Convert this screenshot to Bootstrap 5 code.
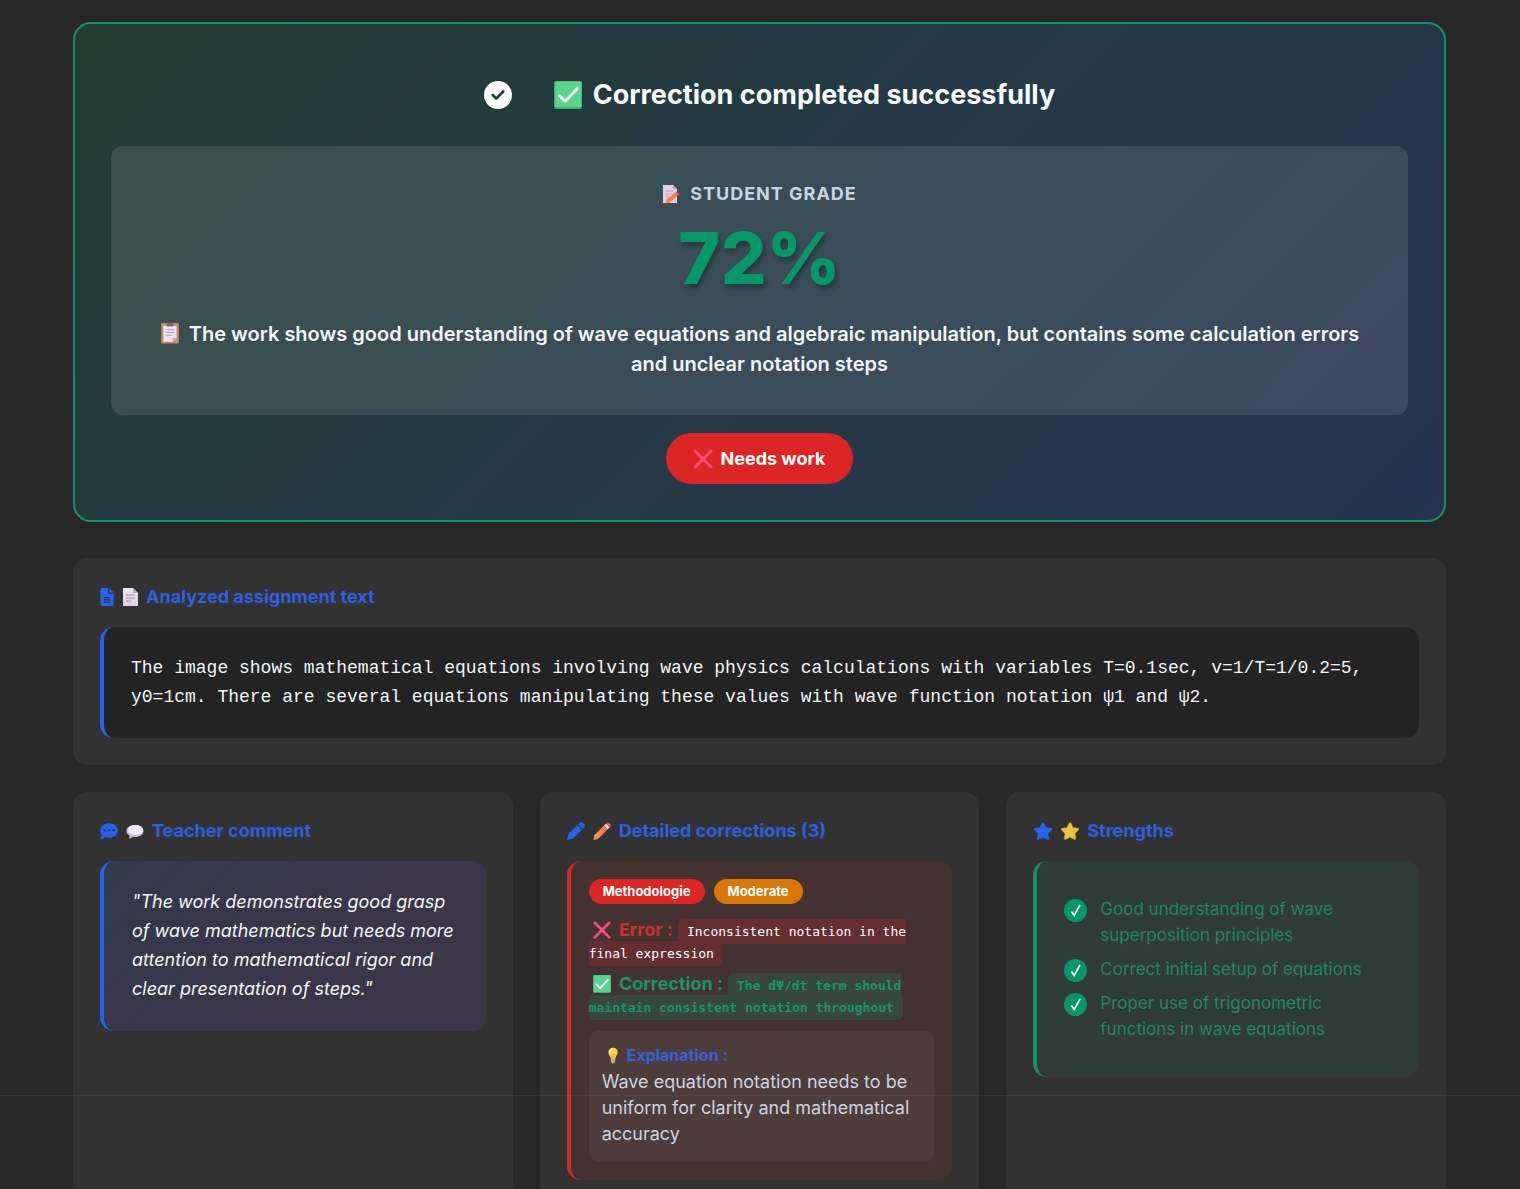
<!DOCTYPE html>
<html lang="en" data-bs-theme="dark">
<head>
<meta charset="utf-8">
<meta name="viewport" content="width=device-width, initial-scale=1">
<title>Correction result</title>
<link href="https://cdn.jsdelivr.net/npm/bootstrap@5.3.0/dist/css/bootstrap.min.css" rel="stylesheet">
<style>
  body { background: #272727; color: #f1f5f9; font-family: Inter, sans-serif; font-size: 18px; }
  .page { padding: 22px 74px 0 73px; scrollbar-width: none; }
  .page::-webkit-scrollbar { display: none; }
  .stack { gap: 27px; }
  .trio { --bs-gutter-x: 27px; --bs-gutter-y: 27px; margin-top: 0; }
  .trio > .col { margin-top: 0; }
  .hero { border: 2px solid #149068; border-radius: 18px; padding: 36px; margin-bottom: 9px;
    background: linear-gradient(135deg, #233c31 0%, #243945 50%, #27334f 100%); }
  .hero-title { font-size: 27px; font-weight: 700; line-height: 36px; padding: 17px 0 33px 20px; margin: 0; gap: 11px; color: #f8fafc; }
  .hero-title .status { margin-right: 31px; }
  .grade { background: rgba(255,255,255,.1); border-radius: 12px; padding: 36px; margin-bottom: 18px; }
  .grade-label { font-size: 18px; font-weight: 700; letter-spacing: 1px; line-height: 24px; color: #cbd5e1; gap: 10px; }
  .grade-value { font-size: 72px; font-weight: 800; line-height: 72px; margin: 16px 0 25px; color: #059669; text-shadow: 2px 4px 5px rgba(0,0,0,.3); }
  .grade-note { font-size: 20px; font-weight: 600; line-height: 30px; color: #f1f5f9; margin: 0; }
  .verdict { background: #dc2626; color: #fff; font-size: 18px; font-weight: 700; line-height: 27px; padding: 12px 27px; gap: 7px; }
  .panel { background: #323232; border-radius: 14px; padding: 27px; }
  .panel-title { font-size: 18px; font-weight: 700; line-height: 24px; color: #2d60e0; margin: 0 0 18px; gap: 8px; }
  .tile { border-left: 4px solid #2563eb; border-radius: 14px; padding: 27px; }
  .source { background: #232323; font-family: "Courier New", "Liberation Mono", monospace; line-height: 29px; padding-bottom: 26px; }
  .quote { background: linear-gradient(135deg, #303a48, #393649 40%, #3c3645); font-style: italic; line-height: 29px; padding: 26px 27px 28px 28px; }
  .fix { background: #443231; border-color: #cf2b2c; padding: 18px; line-height: 22px; }
  .pill { font-size: 13px; font-weight: 700; line-height: 17px; padding: 4px 14px; color: #fff; }
  .pill-red { background: #dc2626; }
  .pill-orange { background: #d97706; }
  .pills { gap: 9px; margin-bottom: 15px; }
  .snippet { font-family: "DejaVu Sans Mono", "Liberation Mono", monospace; font-size: 13px; line-height: 1; color: #fff; padding: 5px 9px; border-radius: 6px; }
  .bad { color: #c9302f; font-weight: 700; }
  .good { color: #18956b; font-weight: 700; }
  .bad + .snippet { background: #652f32; }
  .good + .snippet { background: #37473c; color: #18956b; font-weight: 700; }
  .fix-line { margin: 0 0 10px; }
  .why { background: #4e3c3b; border-radius: 9px; padding: 12px 13px 15px; margin-top: 14px; line-height: 26px; color: #cbd5e1; }
  .why-title { color: #3461dc; font-size: 16px; font-weight: 700; line-height: 24px; margin: 0 0 2px; gap: 7px; }
  .merits { background: #2f3b37; border-color: #149068; padding: 35px 27px; font-size: 17px; line-height: 26px; color: #218665; }
  .merits ul { gap: 8px; }
  .merits li { gap: 13px; }
  .tick { flex: none; margin-top: 3px; }
  .em { vertical-align: -3px; }
  .dock { height: 94px; border-top: 1px solid rgba(255,255,255,.05); pointer-events: none; }
</style>
<script src="https://cdn.jsdelivr.net/npm/bootstrap@5.3.0/dist/js/bootstrap.bundle.min.js"></script>
</head>
<body>
<svg class="position-absolute" width="0" height="0" aria-hidden="true">
  <defs>
    <linearGradient id="pageFill" x1="0" y1="0" x2="0" y2="1"><stop stop-color="#eee6f5"/><stop offset="1" stop-color="#ddd3e6"/></linearGradient>
    <linearGradient id="pencilFill" x1="0" y1="1" x2="1" y2="0"><stop stop-color="#ffa04a"/><stop offset="1" stop-color="#f2683f"/></linearGradient>
  </defs>
  <symbol id="check-box" viewBox="0 0 20 20"><rect width="20" height="20" rx="1.5" fill="#3fae6c"/><rect x=".8" y=".3" width="18.7" height="18.6" rx="1.5" fill="#58d68d"/><path d="M4 10.5 8 14.500 16.500 5.500" fill="none" stroke="#fff" stroke-width="2" stroke-linecap="round" stroke-linejoin="round"/></symbol>
  <symbol id="cross" viewBox="0 0 20 20"><path d="M2 2 18 18M18 2 2 18" fill="none" stroke="#fb4b7c" stroke-width="3" stroke-linecap="round"/></symbol>
  <symbol id="sheet" viewBox="0 0 16 20"><path d="M1 1h10l5 5v13H1z" fill="url(#pageFill)"/><path d="M11 1v5h5z" fill="#b5a8c0"/><path d="M4 8h8.500M4 11h8.500M4 14h5.500" stroke="#b2a7bd" stroke-width="1.300"/></symbol>
  <symbol id="memo" viewBox="0 0 18 20"><path d="M1 1h10l4 4v14H1z" fill="#ded4e8"/><path d="M11 1v4h4z" fill="#a99db7"/><path d="M3.500 7h8M3.500 10h7M3.500 13h4" stroke="#b2a7bd" stroke-width="1.200"/><path d="m4.500 15.500 8.500-7 3 3-8.500 7.300-3.800.7z" fill="#fb7c45"/><path d="m13 8.500 1.500-1.200 3 3L16 11.500z" fill="#ee596c"/></symbol>
  <symbol id="board" viewBox="0 0 18 20"><rect x="1" y="1" width="16" height="18.500" rx="1" fill="#ca8962"/><path d="M3 3.500h12v11L11.500 18H3z" fill="#ebe2f4"/><path d="M11.500 18v-3.500H15z" fill="#b9adc4"/><path d="M6 .5h6v3.500H6z" fill="#6f6577"/><path d="M5 7h8M5 9.500h8M5 12h6" stroke="#b2a7bd"/></symbol>
  <symbol id="bulb" viewBox="0 0 16 20"><path d="M8 1C4.500 1 2.500 3.500 2.500 6.500c0 3 2.500 4 3 7.500h5c.5-3.500 3-4.500 3-7.500C13.500 3.500 11.500 1 8 1z" fill="#ffd34d"/><path d="M8 2.500c-2 0-3.500 1.500-3.500 3.500" stroke="#fff0a8" stroke-width="1.500" fill="none"/><path d="M7 14V9l1-1 1 1v5" stroke="#f59b2d" fill="none"/><path d="M5.500 14h5v3.500L9.500 19h-3l-1-1.500z" fill="#b2a5bc"/></symbol>
</svg>

<main class="page vh-100 overflow-auto">
  <div class="stack d-flex flex-column">
    <section class="hero text-center">
      <h1 class="hero-title d-flex justify-content-center align-items-center">
        <svg class="status" width="28" height="28" viewBox="0 0 512 512" aria-hidden="true"><path fill="#fff" d="M256 512A256 256 0 1 0 256 0a256 256 0 1 0 0 512zM369 209 241 337c-9.400 9.400-24.600 9.400-33.900 0l-64-64c-9.400-9.400-9.400-24.600 0-33.900s24.600-9.400 33.900 0l47 47L335 175c9.400-9.400 24.600-9.400 33.900 0s9.400 24.600 0 33.900z"/></svg>
        <svg width="28" height="28" aria-hidden="true"><use href="#check-box"/></svg>
        <span>Correction completed successfully</span>
      </h1>
      <div class="grade">
        <div class="grade-label d-flex justify-content-center align-items-center">
          <svg width="18" height="20" aria-hidden="true"><use href="#memo"/></svg><span>STUDENT GRADE</span>
        </div>
        <div class="grade-value">72%</div>
        <p class="grade-note"><svg class="em me-1" width="20" height="22" aria-hidden="true"><use href="#board"/></svg> The work shows good understanding of wave equations and algebraic manipulation, but contains some calculation errors and unclear notation steps</p>
      </div>
      <span class="verdict rounded-pill d-inline-flex align-items-center"><svg width="20" height="20" aria-hidden="true"><use href="#cross"/></svg>Needs work</span>
    </section>

    <section class="panel">
      <h2 class="panel-title d-flex align-items-center">
        <svg width="14" height="18" viewBox="0 0 384 512" aria-hidden="true"><path fill="#2563eb" d="M64 0C28.700 0 0 28.700 0 64v384c0 35.300 28.700 64 64 64h256c35.300 0 64-28.700 64-64V160H256c-17.700 0-32-14.300-32-32V0H64zm192 0v128h128L256 0zM112 256h160c8.800 0 16 7.200 16 16s-7.200 16-16 16H112c-8.800 0-16-7.200-16-16s7.200-16 16-16zm0 64h160c8.800 0 16 7.200 16 16s-7.200 16-16 16H112c-8.800 0-16-7.200-16-16s7.200-16 16-16zm0 64h160c8.800 0 16 7.200 16 16s-7.200 16-16 16H112c-8.800 0-16-7.200-16-16s7.200-16 16-16z"/></svg>
        <svg width="16" height="20" aria-hidden="true"><use href="#sheet"/></svg>
        <span>Analyzed assignment text</span>
      </h2>
      <div class="tile source">The image shows mathematical equations involving wave physics calculations with variables T=0.1sec, v=1/T=1/0.2=5, y0=1cm. There are several equations manipulating these values with wave function notation ψ1 and ψ2.</div>
    </section>

    <div class="row row-cols-1 row-cols-lg-3 trio">
      <div class="col">
        <section class="panel h-100">
          <h2 class="panel-title d-flex align-items-center">
            <svg width="18" height="18" viewBox="0 0 512 512" aria-hidden="true"><path fill="#2563eb" d="M256 448c141.400 0 256-93.100 256-208S397.400 32 256 32 0 125.100 0 240c0 45.100 17.700 86.800 47.700 120.900-1.900 24.500-11.400 46.300-21.400 62.900-5.500 9.200-11.100 16.600-15.200 21.600-2.100 2.500-3.700 4.400-4.900 5.700C-.7 457.700-1.700 465.100 1.200 470.100 3.700 476.100 9.500 480 16 480c28.700 0 57.600-8.900 81.600-19.300 22.900-10 42.400-21.900 54.300-30.600C183.700 441.600 218.900 448 256 448z"/><g fill="#323232"><circle cx="128" cy="240" r="32"/><circle cx="256" cy="240" r="32"/><circle cx="384" cy="240" r="32"/></g></svg>
            <svg width="18" height="18" viewBox="0 0 18 18" aria-hidden="true"><path fill="#cabdd8" d="M9 3C4 3 .5 5.500.5 9c0 2 1.200 3.700 3 4.700.2 1-.2 1.800-.8 2.600 1.800 0 3.300-.7 4.200-1.600L9 15c5 0 8.500-2.500 8.500-6S14 3 9 3z"/><ellipse cx="9.500" cy="8" rx="7.500" ry="5" fill="#f3ecfa"/></svg>
            <span>Teacher comment</span>
          </h2>
          <div class="tile quote">"The work demonstrates good grasp of wave mathematics but needs more attention to mathematical rigor and clear presentation of steps."</div>
        </section>
      </div>

      <div class="col">
        <section class="panel h-100">
          <h2 class="panel-title d-flex align-items-center">
            <svg width="18" height="18" viewBox="0 0 512 512" aria-hidden="true"><path fill="#2563eb" d="m362.700 19.300-48.400 48.400 130 130 48.400-48.400c25-25 25-65.500 0-90.500l-39.400-39.500c-25-25-65.500-25-90.500 0zm-71 71L58.600 323.500c-10.400 10.400-18 23.300-22.200 37.400L1 481.200C-1.500 489.700.8 498.800 7 505s15.300 8.500 23.700 6.100l120.300-35.400c14.100-4.200 27-11.800 37.400-22.200L421.700 220.300z"/></svg>
            <svg width="18" height="18" viewBox="0 0 18 18" aria-hidden="true"><path fill="url(#pencilFill)" d="M1 13.500 11 3.500l3.800 3.800-10 9.700z"/><path fill="#e9dcec" d="m11 3.500 2-2 3.800 3.800-2 2z"/><path fill="#ed5a4a" d="m13 1.500.8-.8c.7-.7 1.500-.7 2.200 0l1.300 1.300c.7.7.7 1.500 0 2.200l-.5 1.100z"/><path fill="#f79a52" d="m1 13.500 3.800 3.500L.5 18z"/></svg>
            <span>Detailed corrections (3)</span>
          </h2>
          <div class="tile fix">
            <div class="d-flex pills">
              <span class="pill pill-red rounded-pill">Methodologie</span>
              <span class="pill pill-orange rounded-pill">Moderate</span>
            </div>
            <p class="fix-line"><span class="bad"><svg class="em mx-1" width="18" height="18" aria-hidden="true"><use href="#cross"/></svg> Error :</span> <code class="snippet">Inconsistent notation in the final expression</code></p>
            <p class="fix-line"><span class="good"><svg class="em mx-1" width="18" height="18" aria-hidden="true"><use href="#check-box"/></svg> Correction :</span> <code class="snippet">The dΨ/dt term should maintain consistent notation throughout</code></p>
            <div class="why">
              <h3 class="why-title d-flex align-items-center"><svg class="ms-1" width="14" height="17" aria-hidden="true"><use href="#bulb"/></svg><span>Explanation :</span></h3>
              Wave equation notation needs to be uniform for clarity and mathematical accuracy
            </div>
          </div>
        </section>
      </div>

      <div class="col">
        <section class="panel h-100">
          <h2 class="panel-title d-flex align-items-center">
            <svg width="20" height="18" viewBox="0 0 576 512" aria-hidden="true"><path fill="#2563eb" d="M316.900 18C311.600 7 300.400 0 288.100 0s-23.400 7-28.800 18L195 150.300 51.400 171.500c-12 1.800-22 10.200-25.700 21.700s-.7 24.200 7.900 32.700L137.800 329l-24.600 145.700c-2 12 3 24.200 12.900 31.300s23 8 33.800 2.300l128.300-68.500 128.300 68.500c10.800 5.700 23.900 4.900 33.800-2.300s14.900-19.300 12.900-31.300L438.500 329l104.200-103.100c8.600-8.500 11.700-21.200 7.900-32.700s-13.700-19.900-25.700-21.700L381.200 150.300z"/></svg>
            <svg width="18" height="18" viewBox="20 0 536 512" aria-hidden="true"><path fill="#e9c33c" stroke="#c99a2a" stroke-width="10" d="M316.900 18C311.600 7 300.400 0 288.100 0s-23.400 7-28.800 18L195 150.300 51.400 171.500c-12 1.800-22 10.200-25.700 21.700s-.7 24.200 7.900 32.700L137.800 329l-24.600 145.700c-2 12 3 24.200 12.900 31.300s23 8 33.800 2.300l128.300-68.500 128.300 68.500c10.800 5.700 23.900 4.900 33.800-2.300s14.900-19.300 12.900-31.300L438.500 329l104.200-103.100c8.600-8.500 11.700-21.200 7.900-32.700s-13.700-19.900-25.700-21.700L381.200 150.300z"/></svg>
            <span>Strengths</span>
          </h2>
          <div class="tile merits">
            <ul class="list-unstyled d-flex flex-column mb-0">
              <li class="d-flex"><svg class="tick" width="23" height="23" viewBox="0 0 23 23" aria-hidden="true"><circle cx="11.500" cy="11.500" r="11.500" fill="#059669"/><path d="m7.500 12.500 2.700 4L16 6" fill="none" stroke="#fff" stroke-width="1.600"/></svg><span>Good understanding of wave superposition principles</span></li>
              <li class="d-flex"><svg class="tick" width="23" height="23" viewBox="0 0 23 23" aria-hidden="true"><circle cx="11.500" cy="11.500" r="11.500" fill="#059669"/><path d="m7.500 12.500 2.700 4L16 6" fill="none" stroke="#fff" stroke-width="1.600"/></svg><span>Correct initial setup of equations</span></li>
              <li class="d-flex"><svg class="tick" width="23" height="23" viewBox="0 0 23 23" aria-hidden="true"><circle cx="11.500" cy="11.500" r="11.500" fill="#059669"/><path d="m7.500 12.500 2.700 4L16 6" fill="none" stroke="#fff" stroke-width="1.600"/></svg><span>Proper use of trigonometric functions in wave equations</span></li>
            </ul>
          </div>
        </section>
      </div>
    </div>
  </div>
</main>
<div class="dock fixed-bottom"></div>
</body>
</html>
